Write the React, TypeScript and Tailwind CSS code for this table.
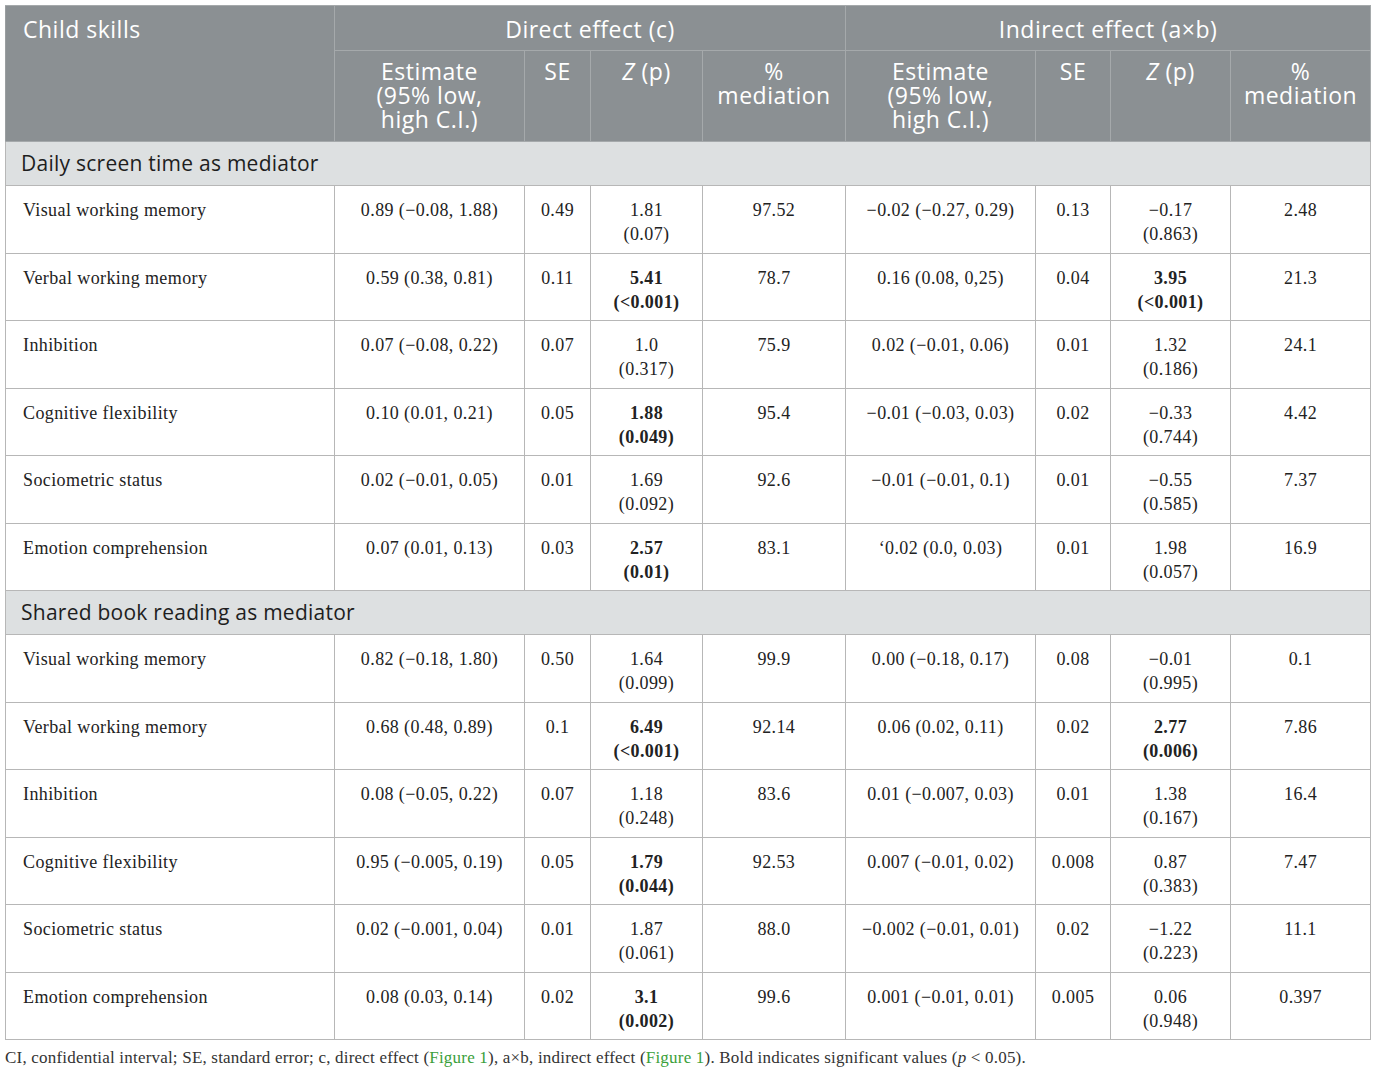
import React from "react"

type Row = {
  skill: string
  d: [string, string, [string, string], string, boolean?]
  i: [string, string, [string, string], string, boolean?]
}

const screen: Row[] = [
  { skill: "Visual working memory", d: ["0.89 (−0.08, 1.88)", "0.49", ["1.81", "(0.07)"], "97.52"], i: ["−0.02 (−0.27, 0.29)", "0.13", ["−0.17", "(0.863)"], "2.48"] },
  { skill: "Verbal working memory", d: ["0.59 (0.38, 0.81)", "0.11", ["5.41", "(<0.001)"], "78.7", true], i: ["0.16 (0.08, 0,25)", "0.04", ["3.95", "(<0.001)"], "21.3", true] },
  { skill: "Inhibition", d: ["0.07 (−0.08, 0.22)", "0.07", ["1.0", "(0.317)"], "75.9"], i: ["0.02 (−0.01, 0.06)", "0.01", ["1.32", "(0.186)"], "24.1"] },
  { skill: "Cognitive flexibility", d: ["0.10 (0.01, 0.21)", "0.05", ["1.88", "(0.049)"], "95.4", true], i: ["−0.01 (−0.03, 0.03)", "0.02", ["−0.33", "(0.744)"], "4.42"] },
  { skill: "Sociometric status", d: ["0.02 (−0.01, 0.05)", "0.01", ["1.69", "(0.092)"], "92.6"], i: ["−0.01 (−0.01, 0.1)", "0.01", ["−0.55", "(0.585)"], "7.37"] },
  { skill: "Emotion comprehension", d: ["0.07 (0.01, 0.13)", "0.03", ["2.57", "(0.01)"], "83.1", true], i: ["‘0.02 (0.0, 0.03)", "0.01", ["1.98", "(0.057)"], "16.9"] },
]

const book: Row[] = [
  { skill: "Visual working memory", d: ["0.82 (−0.18, 1.80)", "0.50", ["1.64", "(0.099)"], "99.9"], i: ["0.00 (−0.18, 0.17)", "0.08", ["−0.01", "(0.995)"], "0.1"] },
  { skill: "Verbal working memory", d: ["0.68 (0.48, 0.89)", "0.1", ["6.49", "(<0.001)"], "92.14", true], i: ["0.06 (0.02, 0.11)", "0.02", ["2.77", "(0.006)"], "7.86", true] },
  { skill: "Inhibition", d: ["0.08 (−0.05, 0.22)", "0.07", ["1.18", "(0.248)"], "83.6"], i: ["0.01 (−0.007, 0.03)", "0.01", ["1.38", "(0.167)"], "16.4"] },
  { skill: "Cognitive flexibility", d: ["0.95 (−0.005, 0.19)", "0.05", ["1.79", "(0.044)"], "92.53", true], i: ["0.007 (−0.01, 0.02)", "0.008", ["0.87", "(0.383)"], "7.47"] },
  { skill: "Sociometric status", d: ["0.02 (−0.001, 0.04)", "0.01", ["1.87", "(0.061)"], "88.0"], i: ["−0.002 (−0.01, 0.01)", "0.02", ["−1.22", "(0.223)"], "11.1"] },
  { skill: "Emotion comprehension", d: ["0.08 (0.03, 0.14)", "0.02", ["3.1", "(0.002)"], "99.6", true], i: ["0.001 (−0.01, 0.01)", "0.005", ["0.06", "(0.948)"], "0.397"] },
]

const sans = "font-['Open_Sans',sans-serif]"
const serif = "font-['Liberation_Serif',serif]"
const td = "border border-[#b7b7b7] align-top pt-[12px] px-1 text-center text-[18px] tracking-[0.4px] leading-6 text-[#222]"
const th = "border border-[#a5a9ab] align-top font-normal text-white text-[23px] tracking-[0.5px] leading-6"

function Group({ rows }: { rows: Row[] }) {
  return (
    <>
      {rows.map((r) => (
        <tr key={r.skill} className="h-[67.5px]">
          <td className={`${td} text-left pl-[17px]`}>{r.skill}</td>
          {[r.d, r.i].map((g, k) => (
            <React.Fragment key={k}>
              <td className={td}>{g[0]}</td>
              <td className={td}>{g[1]}</td>
              <td className={`${td} ${g[4] ? "font-bold" : ""}`}>
                {g[2][0]}
                <br />
                {g[2][1]}
              </td>
              <td className={td}>{g[3]}</td>
            </React.Fragment>
          ))}
        </tr>
      ))}
    </>
  )
}

function Section({ label }: { label: string }) {
  return (
    <tr className="h-[44px] bg-[#dde0e1]">
      <td colSpan={9} className={`border border-[#b7b7b7] pl-[15px] text-[21px] tracking-[0.25px] text-[#1e1e1e] ${sans}`}>
        {label}
      </td>
    </tr>
  )
}

export default function App() {
  return (
    <div className="bg-white min-h-screen pt-[5px] px-[5px]">
      <table className={`w-[1365px] table-fixed border-collapse ${serif}`}>
        <colgroup>
          <col className="w-[329px]" />
          <col className="w-[190px]" />
          <col className="w-[66px]" />
          <col className="w-[112px]" />
          <col className="w-[143px]" />
          <col className="w-[190px]" />
          <col className="w-[75px]" />
          <col className="w-[120px]" />
          <col className="w-[140px]" />
        </colgroup>
        <thead className={`bg-[#8b9093] ${sans}`}>
          <tr className="h-[45px]">
            <th rowSpan={2} className={`${th} text-left pl-[17px] pt-[11px] border-l-[#9a9ea0]`}>
              Child skills
            </th>
            <th colSpan={4} className={`${th} pt-[11px]`}>
              Direct effect (c)
            </th>
            <th colSpan={4} className={`${th} pt-[11px]`}>
              Indirect effect (a×b)
            </th>
          </tr>
          <tr className="h-[91px]">
            <th className={`${th} pt-[8px]`}>
              Estimate
              <br />
              (95% low,
              <br />
              high C.I.)
            </th>
            <th className={`${th} pt-[8px]`}>SE</th>
            <th className={`${th} pt-[8px]`}>
              <i>Z</i> (p)
            </th>
            <th className={`${th} pt-[8px]`}>
              %
              <br />
              mediation
            </th>
            <th className={`${th} pt-[8px]`}>
              Estimate
              <br />
              (95% low,
              <br />
              high C.I.)
            </th>
            <th className={`${th} pt-[8px]`}>SE</th>
            <th className={`${th} pt-[8px]`}>
              <i>Z</i> (p)
            </th>
            <th className={`${th} pt-[8px]`}>
              %
              <br />
              mediation
            </th>
          </tr>
        </thead>
        <tbody>
          <Section label="Daily screen time as mediator" />
          <Group rows={screen} />
          <Section label="Shared book reading as mediator" />
          <Group rows={book} />
        </tbody>
      </table>
      <p className={`mt-[8px] text-[17px] tracking-[0.2px] leading-5 text-[#333] ${serif}`}>
        CI, confidential interval; SE, standard error; c, direct effect (
        <span className="text-[#3aa03a]">Figure 1</span>), a×b, indirect effect (
        <span className="text-[#3aa03a]">Figure 1</span>). Bold indicates significant values (<i>p</i> &lt; 0.05).
      </p>
    </div>
  )
}
